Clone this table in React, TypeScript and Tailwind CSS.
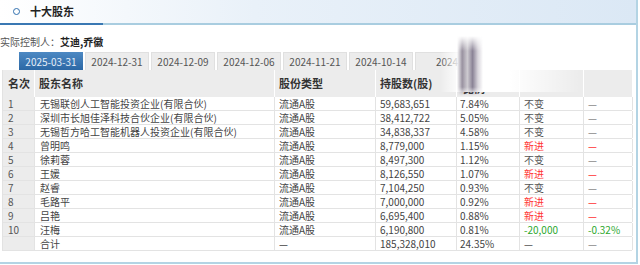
import React from 'react';

type Row = {
  no: string;
  name: string;
  type: string;
  amount: string;
  ratio: string;
  change: string;
  changeRatio: string;
  tone: 'gray' | 'red' | 'green';
};

const rows: Row[] = [
  { no: '1', name: '无锡联创人工智能投资企业(有限合伙)', type: '流通A股', amount: '59,683,651', ratio: '7.84%', change: '不变', changeRatio: '—', tone: 'gray' },
  { no: '2', name: '深圳市长旭佳泽科技合伙企业(有限合伙)', type: '流通A股', amount: '38,412,722', ratio: '5.05%', change: '不变', changeRatio: '—', tone: 'gray' },
  { no: '3', name: '无锡哲方哈工智能机器人投资企业(有限合伙)', type: '流通A股', amount: '34,838,337', ratio: '4.58%', change: '不变', changeRatio: '—', tone: 'gray' },
  { no: '4', name: '曾明鸣', type: '流通A股', amount: '8,779,000', ratio: '1.15%', change: '新进', changeRatio: '—', tone: 'red' },
  { no: '5', name: '徐莉蓉', type: '流通A股', amount: '8,497,300', ratio: '1.12%', change: '不变', changeRatio: '—', tone: 'gray' },
  { no: '6', name: '王媛', type: '流通A股', amount: '8,126,550', ratio: '1.07%', change: '新进', changeRatio: '—', tone: 'red' },
  { no: '7', name: '赵睿', type: '流通A股', amount: '7,104,250', ratio: '0.93%', change: '不变', changeRatio: '—', tone: 'gray' },
  { no: '8', name: '毛路平', type: '流通A股', amount: '7,000,000', ratio: '0.92%', change: '新进', changeRatio: '—', tone: 'red' },
  { no: '9', name: '吕艳', type: '流通A股', amount: '6,695,400', ratio: '0.88%', change: '新进', changeRatio: '—', tone: 'red' },
  { no: '10', name: '汪梅', type: '流通A股', amount: '6,190,800', ratio: '0.81%', change: '-20,000', changeRatio: '-0.32%', tone: 'green' },
  { no: '', name: '合计', type: '—', amount: '185,328,010', ratio: '24.35%', change: '—', changeRatio: '—', tone: 'gray' },
];

const tabs = ['2025-03-31', '2024-12-31', '2024-12-09', '2024-12-06', '2024-11-21', '2024-10-14', '2024'];

const cols = 'grid grid-cols-[32px_240px_101px_81px_63px_64px_49px]';

function toneClass(tone: Row['tone'], isText: boolean) {
  if (tone === 'red') return 'text-[#f33]';
  if (tone === 'green') return 'text-[#2ea82e]';
  return isText ? 'text-[#555]' : 'text-[#888]';
}

export default function App() {
  return (
    <div className="relative w-[640px] h-[265px] overflow-hidden bg-white font-['Noto_Sans_CJK_SC',sans-serif] text-[10px] text-[#444]">
      <div className="w-[638px] h-[264px] border-r-2 border-b-2 border-[#b3d4e4]">
        {/* title bar */}
        <div className="h-[23px] flex items-center bg-[linear-gradient(to_right,#ffffff,#e9f1f9_40%,#dbe8f5)]">
          <span className="ml-[13px] w-[7px] h-[7px] rounded-full border-[1.5px] border-[#2f6fae]" />
          <span className="ml-[10px] text-[11px] font-bold text-[#222] leading-none">十大股东</span>
        </div>
        <div className="flex h-[2px]">
          <div className="w-[103px] bg-[#3a78b3]" />
          <div className="flex-1 bg-[#a9cde0]" />
        </div>

        <div className="pt-[11px] leading-[12px] text-[#555]">
          实际控制人：<span className="font-bold text-[#222]">艾迪,乔徽</span>
        </div>

        {/* tabs */}
        <div className="mt-[4px] pl-[19px] flex gap-[2px] h-[18px]">
          {tabs.map((t, i) => (
            <div
              key={t + i}
              className={
                i === 0
                  ? 'w-[64px] flex items-center justify-center bg-[linear-gradient(#4d89c3,#2c68a5)] text-[#e6eef8]'
                  : 'w-[64px] flex items-center justify-center bg-[#ececec] border border-b-0 border-[#e0e0e0] text-[#555]'
              }
            >
              {t}
            </div>
          ))}
        </div>

        {/* table */}
        <div className="ml-[2px] w-[630px] border-l border-[#e2e2e2]">
          <div className={`${cols} h-[27px] bg-[#ececec] font-bold text-[11px] text-[#333]`}>
            <div className="pl-[5px] flex items-center border-r border-white">名次</div>
            <div className="pl-[4px] flex items-center border-r border-white">股东名称</div>
            <div className="pl-[4px] flex items-center border-r border-white">股份类型</div>
            <div className="pl-[4px] flex items-center border-r border-white">持股数(股)</div>
            <div className="pl-[6px] flex items-end pb-[1px] border-r border-white">比例</div>
            <div className="border-r border-white" />
            <div />
          </div>
          {rows.map((r, i) => (
            <div key={i} className={`${cols} h-[14px] leading-[13px] border-b border-[#e3e3e3]`}>
              <div className="pl-[5px] bg-[#ececec] border-r border-[#e3e3e3] text-[#555]">{r.no}</div>
              <div className="pl-[5px] border-r border-[#e3e3e3] whitespace-nowrap">{r.name}</div>
              <div className="pl-[4px] border-r border-[#e3e3e3]">{r.type}</div>
              <div className="pl-[4px] border-r border-[#e3e3e3]">{r.amount}</div>
              <div className="pl-[3px] border-r border-[#e3e3e3]">{r.ratio}</div>
              <div className={`pl-[4px] border-r border-[#e3e3e3] ${toneClass(r.tone, true)}`}>{r.change}</div>
              <div className={`pl-[4px] border-r border-[#e3e3e3] ${toneClass(r.tone, false)}`}>{r.changeRatio}</div>
            </div>
          ))}
        </div>
      </div>

      {/* blurred glitch over the tabs and the ratio header */}
      <div className="absolute left-[440px] top-[32px] w-[140px] h-[60px] bg-[linear-gradient(to_right,rgba(255,255,255,0),#fff_15%,#fff_50%,rgba(255,255,255,0))]" />
      <div className="absolute left-[457px] top-[36px] w-[26px] h-[60px] bg-[linear-gradient(to_right,rgba(120,110,130,0),rgba(110,100,120,0.7)_20%,rgba(90,80,100,0.3)_40%,rgba(100,90,115,0.75)_60%,rgba(140,130,150,0.35)_80%,rgba(140,130,150,0))] [mask-image:linear-gradient(to_bottom,transparent,black_25%,black_85%,transparent)]" />
    </div>
  );
}
